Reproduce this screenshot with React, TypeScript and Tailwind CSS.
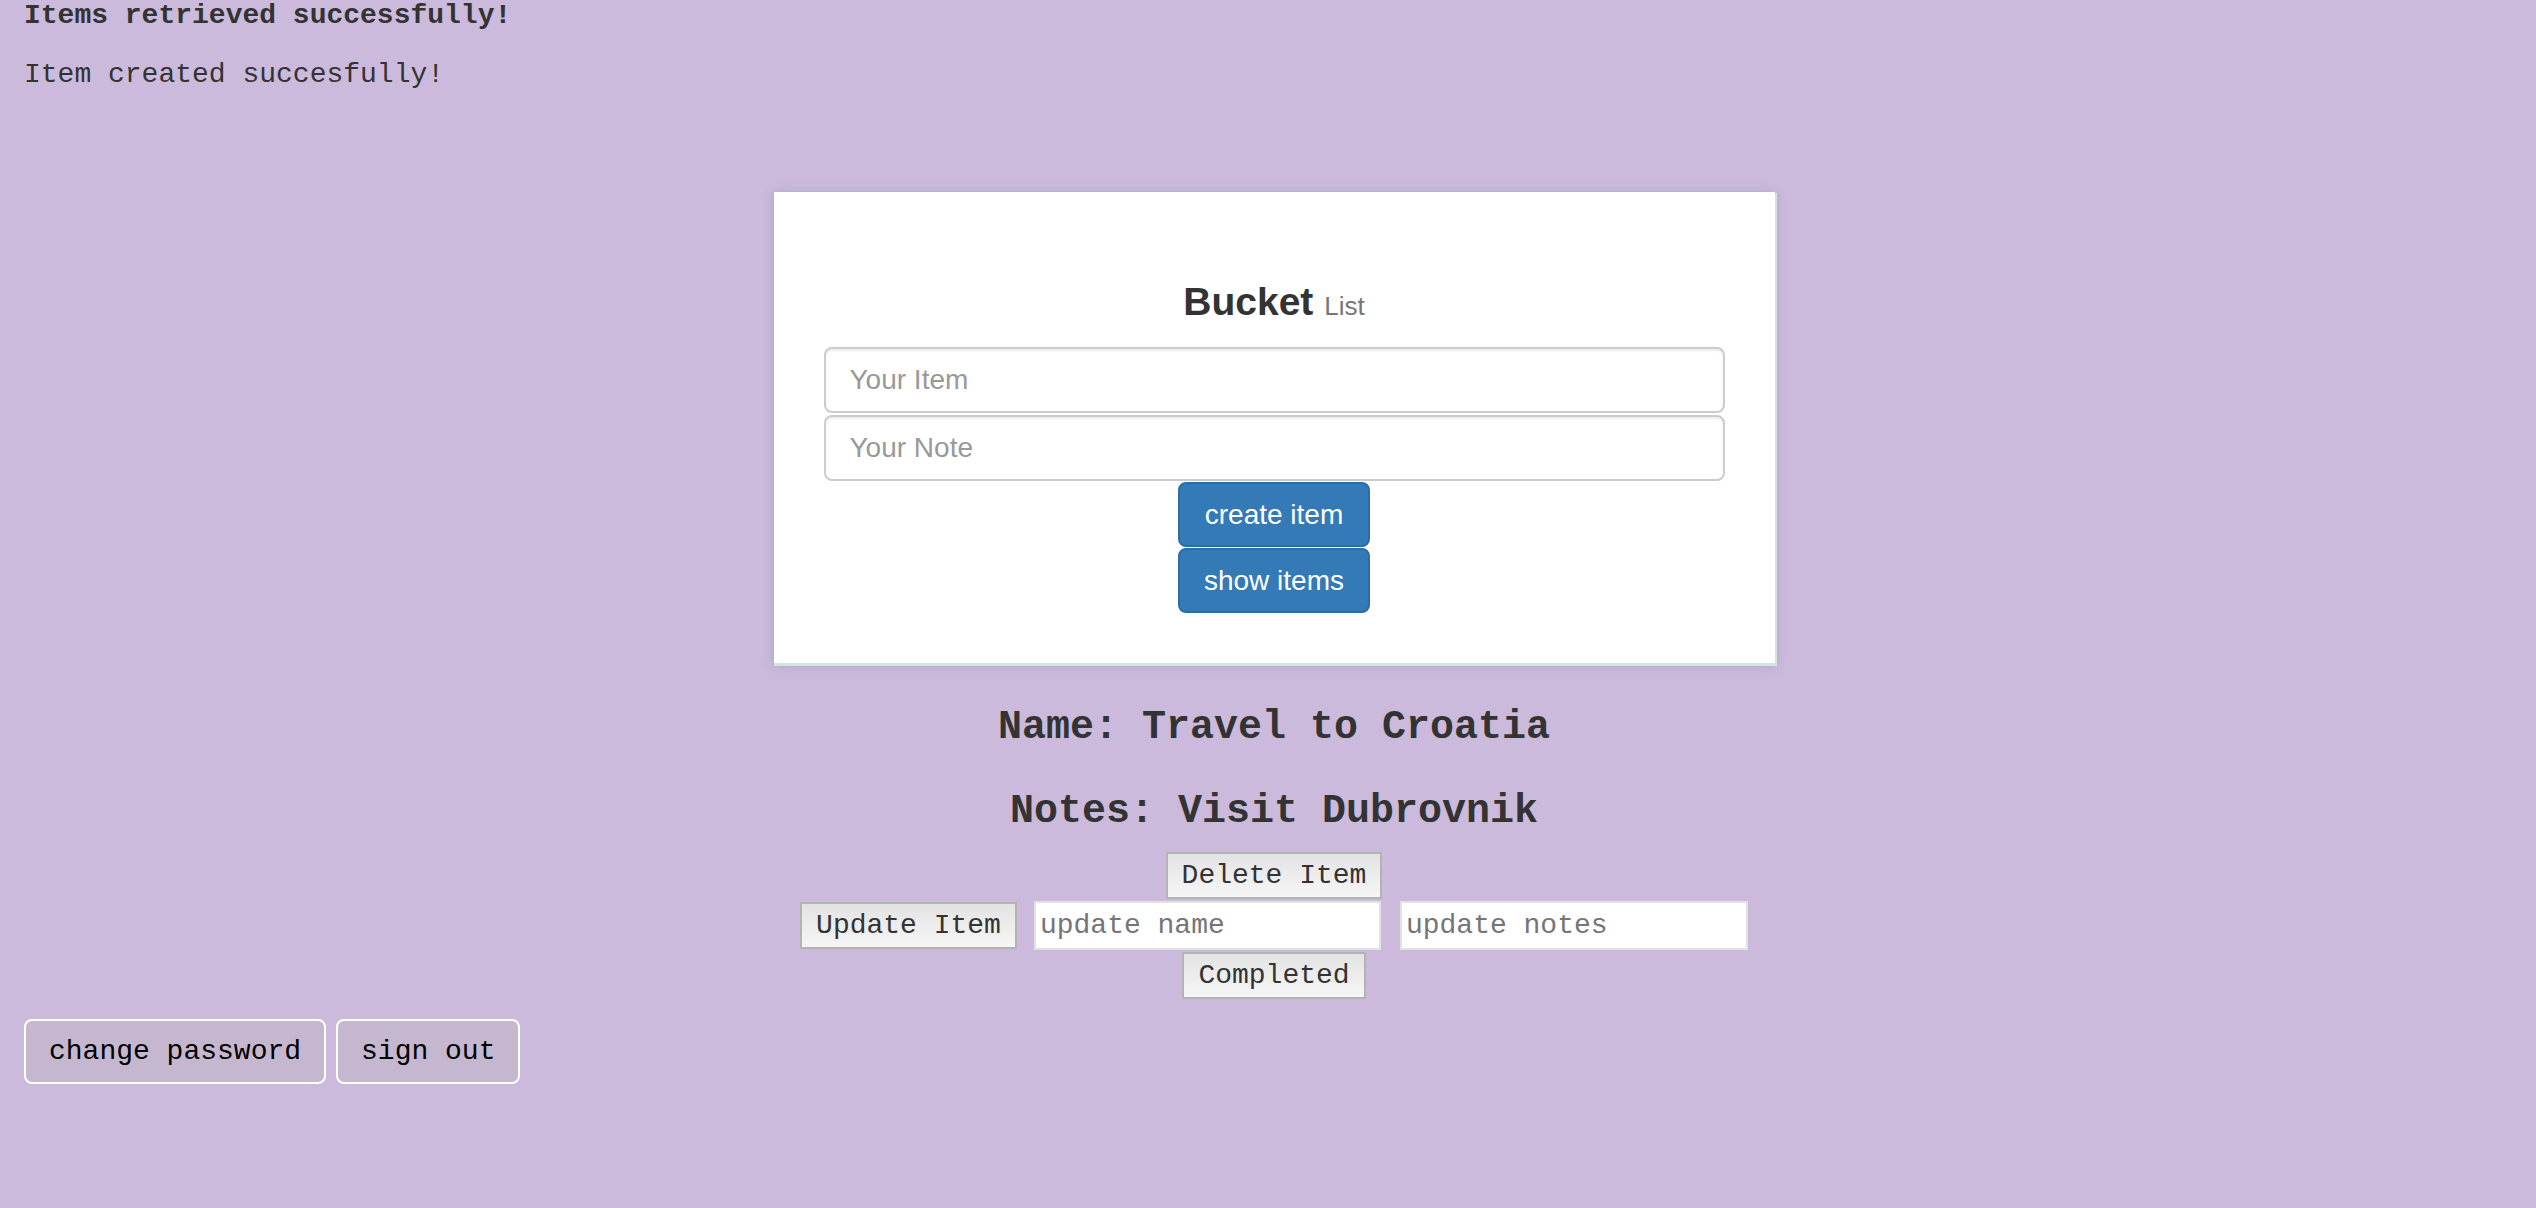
import React from 'react'

const mono = "font-['Liberation_Mono','Courier_New',monospace]"
const sans = "font-['Liberation_Sans',Arial,sans-serif]"

function GrayButton({ label }: { label: string }) {
  return (
    <button
      className={`${mono} h-[47px] px-[14px] text-[28px] leading-none text-[#333] border-2 border-[#b3b3b3] bg-gradient-to-b from-[#e3e3e3] to-[#f6f6f6]`}
    >
      {label}
    </button>
  )
}

function BlueButton({ label }: { label: string }) {
  return (
    <button
      className={`${sans} h-[65px] w-[192px] text-[28px] leading-none text-white bg-[#337ab7] border-2 border-[#2e6da4] rounded-[8px]`}
    >
      {label}
    </button>
  )
}

export default function App() {
  return (
    <main className="min-h-screen w-full bg-[#cbbadb] text-[#333]">
      <div className={`${mono} pl-[24px]`}>
        <div className="h-[32px] leading-[32px] text-[28px] font-bold">Items retrieved successfully!</div>
        <div className="mt-[27px] h-[32px] leading-[32px] text-[28px]">Item created succesfully!</div>
      </div>

      <div className="flex flex-col items-center pl-[12px] mt-[101px]">
        <section className="w-[1001px] bg-white pt-[88px] pb-[50px] px-[50px] flex flex-col items-center shadow-[1px_2px_0_1px_#d4e3e3,0_2px_10px_rgba(110,130,150,0.45)]">
          <h1 className={`${sans} h-[44px] leading-[44px] text-[39px] font-bold text-[#333]`}>
            Bucket <span className="text-[26px] font-normal text-[#777]">List</span>
          </h1>
          <div className="mt-[23px] w-full flex flex-col gap-[2px]">
            <input
              placeholder="Your Item"
              className={`${sans} h-[66px] w-full px-[24px] text-[28px] border-2 border-[#ccc] rounded-[8px] placeholder:text-[#999] shadow-[inset_0_2px_2px_rgba(0,0,0,0.075)] outline-none`}
            />
            <input
              placeholder="Your Note"
              className={`${sans} h-[66px] w-full px-[24px] text-[28px] border-2 border-[#ccc] rounded-[8px] placeholder:text-[#999] shadow-[inset_0_2px_2px_rgba(0,0,0,0.075)] outline-none`}
            />
          </div>
          <div className="mt-[1px] flex flex-col items-center gap-[1px]">
            <BlueButton label="create item" />
            <BlueButton label="show items" />
          </div>
        </section>

        <h3 className={`${mono} mt-[41px] h-[48px] leading-[48px] text-[40px] font-bold`}>Name: Travel to Croatia</h3>
        <h3 className={`${mono} mt-[36px] h-[48px] leading-[48px] text-[40px] font-bold`}>Notes: Visit Dubrovnik</h3>

        <div className="mt-[16px] flex flex-col items-center gap-[2px]">
          <GrayButton label="Delete Item" />
          <div className="flex items-center">
            <GrayButton label="Update Item" />
            <input
              placeholder="update name"
              className={`${mono} ml-[17px] h-[49px] w-[347px] px-[4px] text-[28px] bg-white border-2 border-[#e2e2e2] placeholder:text-[#757575] outline-none`}
            />
            <input
              placeholder="update notes"
              className={`${mono} ml-[19px] h-[49px] w-[348px] px-[4px] text-[28px] bg-white border-2 border-[#e2e2e2] placeholder:text-[#757575] outline-none`}
            />
          </div>
          <GrayButton label="Completed" />
        </div>
      </div>

      <div className={`${mono} mt-[20px] pl-[24px] flex gap-[10px]`}>
        <button className="h-[65px] px-[23px] text-[28px] leading-none text-black bg-[#c4b7cf] border-2 border-white rounded-[8px]">
          change password
        </button>
        <button className="h-[65px] px-[23px] text-[28px] leading-none text-black bg-[#c4b7cf] border-2 border-white rounded-[8px]">
          sign out
        </button>
      </div>
    </main>
  )
}
